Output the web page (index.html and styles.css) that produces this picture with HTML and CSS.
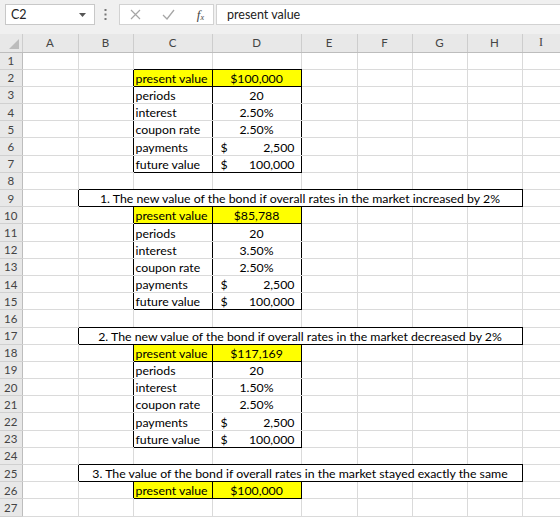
FILE: index.html
```html
<!DOCTYPE html>
<html lang="en">
<head>
    <meta charset="UTF-8">
    <meta name="viewport" content="width=device-width, initial-scale=1.0">
    <title>Bond Value</title>
    <link rel="stylesheet" href="styles.css">
</head>
<body>

    <!-- Name box + formula bar -->
    <div class="formula-bar">
        <div class="name-box">
            <span>C2</span>
            <svg width="7" height="4" viewBox="0 0 7 4"><path d="M0 0h7L3.5 4z" fill="#555"/></svg>
        </div>
        <svg class="grip" width="3" height="11" viewBox="0 0 3 11">
            <rect x="0.5" y="0" width="2" height="2" fill="#777"/>
            <rect x="0.5" y="4.5" width="2" height="2" fill="#777"/>
            <rect x="0.5" y="9" width="2" height="2" fill="#777"/>
        </svg>
        <div class="fx-box">
            <svg width="11" height="11" viewBox="0 0 11 11"><path d="M1 1l9 9M10 1l-9 9" stroke="#a6a6a6" stroke-width="1.2" fill="none"/></svg>
            <svg width="13" height="11" viewBox="0 0 13 11"><path d="M1 6l4 4 7-9" stroke="#a6a6a6" stroke-width="1.3" fill="none"/></svg>
            <span class="fx">f<sub>x</sub></span>
        </div>
        <div class="formula">present value</div>
    </div>

    <!-- Worksheet -->
    <table class="sheet">
        <colgroup>
            <col style="width:22px"><col style="width:56px"><col style="width:55px"><col style="width:79px"><col style="width:89px">
            <col style="width:56px"><col style="width:55px"><col style="width:55px"><col style="width:55px"><col style="width:38px">
        </colgroup>
        <tr class="heads">
            <th class="corner"><span class="tri"></span></th>
            <th>A</th><th>B</th><th>C</th><th>D</th><th>E</th><th>F</th><th>G</th><th>H</th><th class="serif">I</th>
        </tr>

        <!-- starting bond -->
        <tr><th>1</th><td></td><td></td><td class="bb"></td><td class="bb"></td><td></td><td></td><td></td><td></td><td></td></tr>
        <tr><th>2</th><td></td><td class="rb"></td><td class="hl rb bb">present value</td><td class="hl rb bb num">$100,000</td><td></td><td></td><td></td><td></td><td></td></tr>
        <tr><th>3</th><td></td><td class="rb"></td><td class="rb">periods</td><td class="rb num">20</td><td></td><td></td><td></td><td></td><td></td></tr>
        <tr><th>4</th><td></td><td class="rb"></td><td class="rb">interest</td><td class="rb num">2.50%</td><td></td><td></td><td></td><td></td><td></td></tr>
        <tr><th>5</th><td></td><td class="rb"></td><td class="rb">coupon rate</td><td class="rb num">2.50%</td><td></td><td></td><td></td><td></td><td></td></tr>
        <tr><th>6</th><td></td><td class="rb"></td><td class="rb">payments</td><td class="rb acc"><span>$</span><span>2,500</span></td><td></td><td></td><td></td><td></td><td></td></tr>
        <tr><th>7</th><td></td><td class="rb"></td><td class="rb bb">future value</td><td class="rb bb acc"><span>$</span><span>100,000</span></td><td></td><td></td><td></td><td></td><td></td></tr>
        <tr><th>8</th><td></td><td class="bb"></td><td class="bb"></td><td class="bb"></td><td class="bb"></td><td class="bb"></td><td class="bb"></td><td class="bb"></td><td></td></tr>

        <!-- rates up 2% -->
        <tr><th>9</th><td class="rb"></td><td class="title" colspan="7">1. The new value of the bond if overall rates in the market increased by 2%</td><td></td></tr>
        <tr><th>10</th><td></td><td class="rb"></td><td class="hl rb bb">present value</td><td class="hl rb bb num">$85,788</td><td></td><td></td><td></td><td></td><td></td></tr>
        <tr><th>11</th><td></td><td class="rb"></td><td class="rb">periods</td><td class="rb num">20</td><td></td><td></td><td></td><td></td><td></td></tr>
        <tr><th>12</th><td></td><td class="rb"></td><td class="rb">interest</td><td class="rb num">3.50%</td><td></td><td></td><td></td><td></td><td></td></tr>
        <tr><th>13</th><td></td><td class="rb"></td><td class="rb">coupon rate</td><td class="rb num">2.50%</td><td></td><td></td><td></td><td></td><td></td></tr>
        <tr><th>14</th><td></td><td class="rb"></td><td class="rb">payments</td><td class="rb acc"><span>$</span><span>2,500</span></td><td></td><td></td><td></td><td></td><td></td></tr>
        <tr><th>15</th><td></td><td class="rb"></td><td class="rb bb">future value</td><td class="rb bb acc"><span>$</span><span>100,000</span></td><td></td><td></td><td></td><td></td><td></td></tr>
        <tr><th>16</th><td></td><td class="bb"></td><td class="bb"></td><td class="bb"></td><td class="bb"></td><td class="bb"></td><td class="bb"></td><td class="bb"></td><td></td></tr>

        <!-- rates down 2% -->
        <tr><th>17</th><td class="rb"></td><td class="title" colspan="7">2. The new value of the bond if overall rates in the market decreased by 2%</td><td></td></tr>
        <tr><th>18</th><td></td><td class="rb"></td><td class="hl rb bb">present value</td><td class="hl rb bb num">$117,169</td><td></td><td></td><td></td><td></td><td></td></tr>
        <tr><th>19</th><td></td><td class="rb"></td><td class="rb">periods</td><td class="rb num">20</td><td></td><td></td><td></td><td></td><td></td></tr>
        <tr><th>20</th><td></td><td class="rb"></td><td class="rb">interest</td><td class="rb num">1.50%</td><td></td><td></td><td></td><td></td><td></td></tr>
        <tr><th>21</th><td></td><td class="rb"></td><td class="rb">coupon rate</td><td class="rb num">2.50%</td><td></td><td></td><td></td><td></td><td></td></tr>
        <tr><th>22</th><td></td><td class="rb"></td><td class="rb">payments</td><td class="rb acc"><span>$</span><span>2,500</span></td><td></td><td></td><td></td><td></td><td></td></tr>
        <tr><th>23</th><td></td><td class="rb"></td><td class="rb bb">future value</td><td class="rb bb acc"><span>$</span><span>100,000</span></td><td></td><td></td><td></td><td></td><td></td></tr>
        <tr><th>24</th><td></td><td class="bb"></td><td class="bb"></td><td class="bb"></td><td class="bb"></td><td class="bb"></td><td class="bb"></td><td class="bb"></td><td></td></tr>

        <!-- rates unchanged -->
        <tr><th>25</th><td class="rb"></td><td class="title" colspan="7">3. The value of the bond if overall rates in the market stayed exactly the same</td><td></td></tr>
        <tr><th>26</th><td></td><td class="rb"></td><td class="hl rb bb">present value</td><td class="hl rb bb num">$100,000</td><td></td><td></td><td></td><td></td><td></td></tr>
        <tr><th>27</th><td></td><td></td><td></td><td></td><td></td><td></td><td></td><td></td><td></td></tr>
    </table>

</body>
</html>
```

FILE: styles.css
```css
body {
    margin: 0;
    background-color: #fff;
    font-family: Lato, "Liberation Sans", sans-serif;
    color: #000;
    overflow: hidden;
}

/* top strip: name box, icons, formula */
.formula-bar {
    display: flex;
    align-items: flex-start;
    height: 34px;
    padding: 4px 0 0 5px;
    box-sizing: border-box;
    background-color: #f0f0f0;
}
.name-box {
    display: flex;
    align-items: center;
    justify-content: space-between;
    width: 90px;
    height: 21px;
    box-sizing: border-box;
    padding: 0 8px 0 5px;
    border: 1px solid #c8c8c8;
    background-color: #fff;
    font-size: 12.5px;
    color: #222;
}
.grip {
    margin: 5px 12px 0 9px;
}
.fx-box {
    display: flex;
    align-items: center;
    justify-content: space-between;
    width: 95px;
    height: 21px;
    box-sizing: border-box;
    padding: 0 9px 0 10px;
    border: 1px solid #d2d2d2;
    background-color: #fff;
}
.fx {
    font-family: "Liberation Serif", serif;
    font-style: italic;
    font-size: 13px;
    color: #444;
}
.fx sub {
    font-size: 8px;
    vertical-align: -1px;
}
.formula {
    flex: 1;
    height: 21px;
    box-sizing: border-box;
    margin-left: 2px;
    padding-left: 10px;
    border: 1px solid #d2d2d2;
    border-right: none;
    background-color: #fff;
    font-size: 12.5px;
    line-height: 19px;
    color: #222;
}

/* grid */
.sheet {
    width: 560px;
    table-layout: fixed;
    border-collapse: collapse;
    font-size: 12.3px;
}
.sheet tr {
    height: 17.2px;
}
.sheet tr.heads {
    height: 18px;
}
.sheet th {
    background-color: #e8e8e8;
    color: #444;
    font-weight: normal;
    font-size: 11.5px;
    padding: 0;
    border-right: 1px solid #bdbdbd;
    border-bottom: 1px solid #d0d0d0;
}
.heads th {
    border-right: 1px solid #cdcdcd;
    border-bottom: 1px solid #bdbdbd;
}
.heads th.serif {
    font-family: "Liberation Serif", serif;
    font-size: 12px;
}
.heads .corner {
    position: relative;
}
.tri {
    position: absolute;
    right: 3px;
    bottom: 3px;
    width: 0;
    height: 0;
    border-left: 10px solid transparent;
    border-bottom: 10px solid #bcbcbc;
}
.sheet td {
    padding: 0 2px;
    line-height: 15px;
    vertical-align: bottom;
    white-space: nowrap;
    overflow: hidden;
    border-right: 1px solid #dadada;
    border-bottom: 1px solid #dadada;
}

/* cell formats */
.sheet td.rb {
    border-right-color: #000;
}
.sheet td.bb {
    border-bottom-color: #000;
}
.hl {
    background-color: #ffff00;
}
.num {
    text-align: center;
}
.sheet td.acc {
    padding: 0 6px 0 8px;
}
.acc span:last-child {
    float: right;
}
.sheet td.title {
    text-align: center;
    border-right-color: #000;
    border-bottom-color: #000;
}
```
